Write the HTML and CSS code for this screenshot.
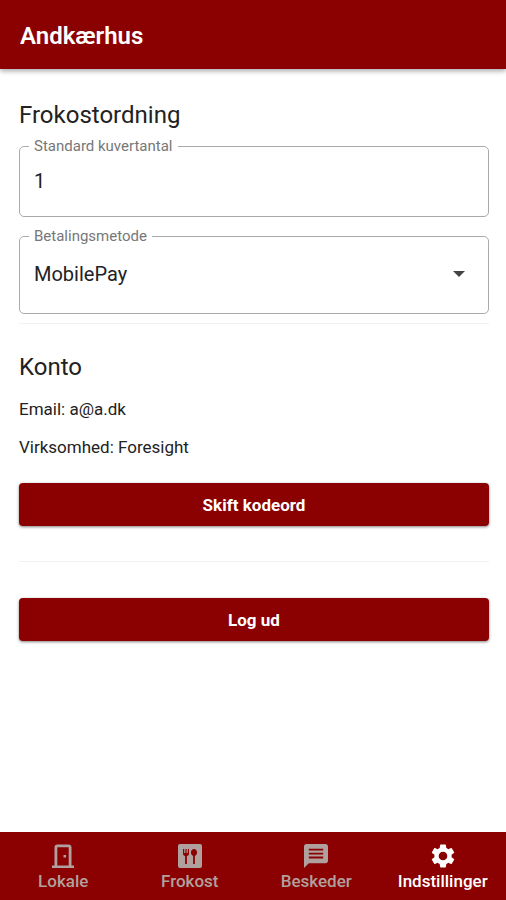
FILE: index.html
```html
<!DOCTYPE html>
<html lang="da">
<head>
<meta charset="utf-8">
<meta name="viewport" content="width=device-width, initial-scale=1">
<title>Andkærhus</title>
<link rel="stylesheet" href="styles.css">
</head>
<body>
<header class="app-bar"><h1>Andkærhus</h1></header>
<main class="content">
  <section class="section">
    <h2>Frokostordning</h2>
    <fieldset class="field">
      <legend><label for="count">Standard kuvertantal</label></legend>
      <input id="count" type="text" inputmode="numeric" value="1">
    </fieldset>
    <fieldset class="field field-select">
      <legend><label for="payment">Betalingsmetode</label></legend>
      <div class="select-row">
        <select id="payment"><option>MobilePay</option></select>
        <svg class="arrow" viewBox="0 0 12 6" aria-hidden="true"><path d="M0 0h12L6 6z"/></svg>
      </div>
    </fieldset>
  </section>
  <section class="section account">
    <h2>Konto</h2>
    <p>Email: a@a.dk</p>
    <p>Virksomhed: Foresight</p>
    <button class="button" type="button">Skift kodeord</button>
  </section>
  <section class="section session">
    <button class="button" type="button">Log ud</button>
  </section>
</main>
<nav class="tabs">
  <a href="#lokale">
    <svg viewBox="0 0 24 24" aria-hidden="true"><path fill-rule="evenodd" d="M3.500 21.500V3.500a3 3 0 0 1 3-3h11a3 3 0 0 1 3 3v18H23V24H1v-2.500zM6.300 3.200v18.300h11.400V3.200zM12.500 11h2.600v2.600h-2.600z"/></svg>
    <span>Lokale</span>
  </a>
  <a href="#frokost">
    <svg viewBox="0 0 24 24" aria-hidden="true"><path fill-rule="evenodd" d="M2 0h20a2 2 0 0 1 2 2v20a2 2 0 0 1-2 2H2a2 2 0 0 1-2-2V2a2 2 0 0 1 2-2zM5 5v4.500c0 1.300.9 2.300 2.100 2.500v8h1.800v-8c1.200-.2 2.100-1.200 2.100-2.500V5H9.800v4H8.600V5H7.400v4H6.200V5zM16 5c-1.800 0-3.100 1.600-3.100 3.600 0 1.600.9 2.900 2.200 3.300V20h1.800v-8.100c1.300-.4 2.200-1.700 2.200-3.300C19.100 6.600 17.800 5 16 5z"/></svg>
    <span>Frokost</span>
  </a>
  <a href="#beskeder">
    <svg viewBox="2 2 20 20" aria-hidden="true"><path fill-rule="evenodd" d="M20 2H4c-1.100 0-2 .9-2 2v18l4-4h14c1.100 0 2-.9 2-2V4c0-1.100-.9-2-2-2zM6 6h12v1.500H6zm0 3.200h12v1.500H6zm0 3.300h12V14H6z"/></svg>
    <span>Beskeder</span>
  </a>
  <a class="active" href="#indstillinger" aria-current="page">
    <svg viewBox="2 2 20 20" aria-hidden="true"><path d="M19.140 12.940c.04-.3.060-.61.060-.94 0-.32-.02-.64-.07-.94l2.030-1.580a.49.49 0 0 0 .12-.61l-1.920-3.320a.488.488 0 0 0-.59-.22l-2.390.96c-.5-.38-1.030-.7-1.620-.94l-.36-2.540a.484.484 0 0 0-.48-.41h-3.840c-.24 0-.43.17-.47.41l-.36 2.540c-.59.24-1.130.57-1.620.94l-2.390-.96c-.22-.08-.47 0-.59.22L2.740 8.870c-.12.21-.08.47.12.61l2.030 1.580c-.05.3-.09.63-.09.94s.02.64.07.94l-2.030 1.580a.49.49 0 0 0-.12.61l1.920 3.320c.12.22.37.29.59.22l2.390-.96c.5.38 1.030.7 1.620.94l.36 2.540c.05.24.24.41.48.41h3.840c.24 0 .44-.17.47-.41l.36-2.540c.59-.24 1.130-.56 1.620-.94l2.390.96c.22.08.47 0 .59-.22l1.920-3.320c.12-.22.070-.47-.12-.61zM12 15.600A3.600 3.600 0 1 1 12 8.400a3.600 3.600 0 0 1 0 7.200z"/></svg>
    <span>Indstillinger</span>
  </a>
</nav>
</body>
</html>
```
FILE: styles.css
```css
* { box-sizing: border-box; }

body {
  margin: 0;
  min-height: 100vh;
  display: flex;
  flex-direction: column;
  background: #fff;
  color: #222;
  font-family: Roboto, "Liberation Sans", sans-serif;
  font-size: 17px;
}

h1, h2, p { margin: 0; }

.app-bar {
  padding: 21px 20px 18px;
  background: #8b0000;
  color: #fff;
  box-shadow: 0 2px 5px rgba(0, 0, 0, 0.35);
}

h1 {
  font-size: 24px;
  line-height: 30px;
  font-weight: 600;
}

h2 {
  font-size: 24px;
  line-height: 32px;
  font-weight: 400;
}

.content {
  flex: 1;
  padding: 30px 17px 20px 19px;
}

.section + .section { border-top: 1px solid #f2f2f2; }

.field {
  min-width: 0;
  height: 79px;
  margin: 7px 0 0;
  padding: 0 14px;
  border: 1px solid #aaa;
  border-radius: 5px;
}

.field-select {
  height: 86px;
  margin: 11px 0 9px;
}

legend {
  margin-left: -5px;
  padding: 0 5px;
  color: #777;
  font-size: 15px;
  line-height: 16px;
}

.field input, .field select {
  width: 100%;
  padding: 0;
  border: 0;
  outline: 0;
  background: transparent;
  color: #222;
  font: inherit;
  font-size: 20px;
  line-height: 24px;
}

.field input { height: 54px; }

.select-row {
  display: flex;
  align-items: center;
  height: 60px;
  padding-right: 9px;
}

.field select {
  flex: 1;
  appearance: none;
}

.arrow {
  width: 12px;
  height: 6px;
  fill: #444;
  pointer-events: none;
}

.account { padding: 27px 0 35px; }

.account p {
  margin-top: 14px;
  line-height: 24px;
}

.account .button { margin-top: 24px; }

.session { padding-top: 36px; }

.button {
  display: block;
  width: 100%;
  height: 43px;
  border: 0;
  border-radius: 4px;
  background: #8b0000;
  color: #fff;
  box-shadow: 0 1px 3px rgba(0, 0, 0, 0.5);
  font: inherit;
  font-size: 17px;
  font-weight: 700;
}

.tabs {
  display: flex;
  background: #8b0000;
}

.tabs a {
  flex: 1 1 0;
  display: flex;
  flex-direction: column;
  align-items: center;
  gap: 2px;
  padding: 12px 0 8px;
  color: #b0a09e;
  font-size: 17px;
  line-height: 22px;
  font-weight: 500;
  text-decoration: none;
}

.tabs .active { color: #fff; }

.tabs svg {
  width: 24px;
  height: 24px;
  fill: currentColor;
}
```
